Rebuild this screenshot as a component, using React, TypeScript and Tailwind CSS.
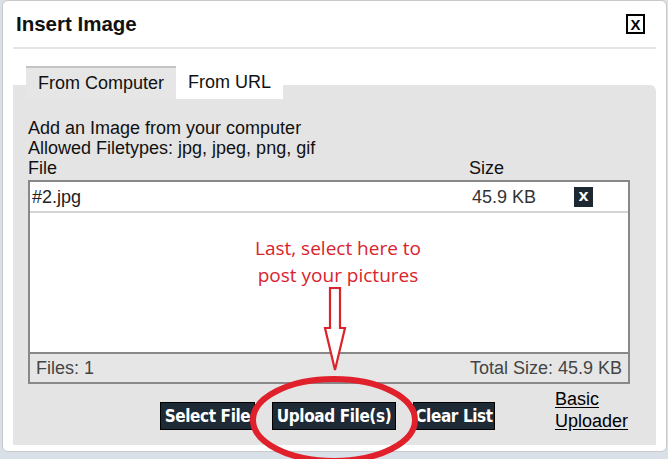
import React from "react";

export default function App() {
  return (
    <div className="relative w-[668px] h-[459px] overflow-hidden bg-[#d9e0e8] font-['Liberation_Sans',Arial,sans-serif] text-black">
      {/* dialog */}
      <div className="ml-[2px] w-[665px] h-[452px] bg-white border border-[#c9c9c9] rounded-[6px] px-[10px] flex flex-col">
        {/* header */}
        <div className="h-[48px] flex items-center justify-between border-b-2 border-[#e4e4e4] shrink-0">
          <div className="pl-[3px] text-[20.5px] font-bold text-[#111] leading-none">Insert Image</div>
          <div className="mr-[11px] w-[19px] h-[20px] border-2 border-black flex items-center justify-center text-[15px] font-bold leading-none">
            X
          </div>
        </div>

        {/* tabs + panel */}
        <div className="mt-[36px] flex-1 mb-[6px] bg-[#e4e4e4] rounded-tr-[6px] flex flex-col">
          <div className="-mt-[19px] pl-[13px] flex h-[33px] shrink-0">
            <div className="w-[150px] h-[33px] bg-[#e6e6e6] border-t-2 border-[#c3c3c3] flex items-center justify-center text-[18px] text-[#111]">
              From Computer
            </div>
            <div className="w-[107px] h-[33px] bg-white flex items-center justify-center text-[18px] text-[#111]">
              From URL
            </div>
          </div>

          <div className="pl-[15px] pr-[25px] pt-[19px] text-[18px] leading-[20px] text-[#111]">
            <div>Add an Image from your computer</div>
            <div>Allowed Filetypes: jpg, jpeg, png, gif</div>
            <div className="flex">
              <div className="w-[441px]">File</div>
              <div>Size</div>
            </div>

            {/* list box */}
            <div className="mt-[2px] w-[602px] border-2 border-[#888] bg-white flex flex-col">
              <div className="h-[31px] flex items-center border-b-2 border-[#d4d4d4]">
                <div className="pl-[2px] w-[442px] text-[#222]">#2.jpg</div>
                <div className="w-[102px] text-[#333]">45.9 KB</div>
                <div className="w-[19px] h-[20px] bg-[#1d2832] flex items-center justify-center text-white text-[13px] font-bold leading-none font-['DejaVu_Sans',sans-serif]">
                  X
                </div>
              </div>
              <div className="h-[141px] border-b-2 border-[#888]" />
              <div className="h-[28px] bg-[#e6e6e6] flex items-center justify-between pl-[6px] pr-[6px] text-[#444]">
                <span>Files: 1</span>
                <span>Total Size: 45.9 KB</span>
              </div>
            </div>

            {/* buttons */}
            <div className="mt-[4px] flex items-start">
              <div className="ml-[132px] mt-[14px] flex gap-[17px]">
                <button className="h-[28px] w-[95px] bg-[#1e2a35] border border-black text-white font-bold text-[17px] font-['DejaVu_Sans_Condensed','DejaVu_Sans',sans-serif] tracking-[-0.4px] flex items-center justify-center">
                  Select File
                </button>
                <button className="h-[28px] w-[124px] bg-[#1e2a35] border border-black text-white font-bold text-[17px] font-['DejaVu_Sans_Condensed','DejaVu_Sans',sans-serif] tracking-[-0.4px] flex items-center justify-center">
                  Upload File(s)
                </button>
                <button className="h-[28px] w-[82px] bg-[#1e2a35] border border-black text-white font-bold text-[17px] font-['DejaVu_Sans_Condensed','DejaVu_Sans',sans-serif] tracking-[-0.4px] flex items-center justify-center overflow-hidden whitespace-nowrap">
                  Clear List
                </button>
              </div>
              <div className="ml-[60px] leading-[22px] underline underline-offset-2 text-black">
                <div>Basic</div>
                <div>Uploader</div>
              </div>
            </div>
          </div>
        </div>
      </div>

      {/* red annotation overlay */}
      <div className="absolute left-[228px] top-[235px] w-[220px] text-center text-[#d9232d] text-[19px] leading-[27px] font-['Open_Sans',sans-serif] whitespace-nowrap">
        <div>Last, select here to</div>
        <div>post your pictures</div>
      </div>
      <svg className="absolute left-0 top-0" width="668" height="459" viewBox="0 0 668 459">
        <path
          d="M330 288 H340 V328 H345 L335 370 L325 328 H330 Z"
          fill="white"
          stroke="#d9232d"
          strokeWidth="2.2"
          strokeLinejoin="miter"
        />
        <ellipse cx="334" cy="420" rx="81" ry="41" fill="none" stroke="#e0202b" strokeWidth="6" />
      </svg>
    </div>
  );
}
